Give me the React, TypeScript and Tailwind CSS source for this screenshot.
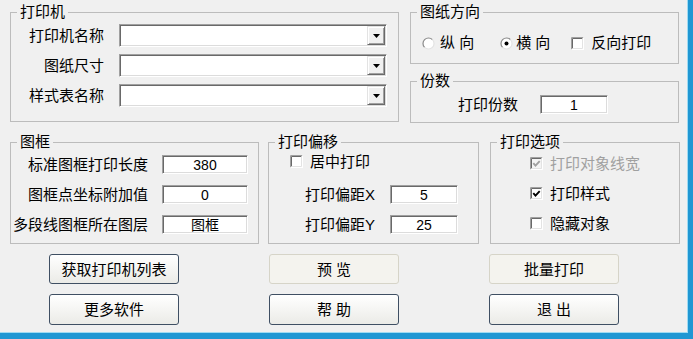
import type { ReactNode } from "react";

function GroupBox({
  title,
  className = "",
  children,
}: {
  title: string;
  className?: string;
  children?: ReactNode;
}) {
  return (
    <fieldset className={`border border-[#bcbcbc] min-w-0 ${className}`}>
      <legend className="ml-[6px] px-[3px] text-[15px] leading-[18px]">{title}</legend>
      {children}
    </fieldset>
  );
}

// classic sunken edit box
function Field({ value, className = "" }: { value: string; className?: string }) {
  return (
    <div
      className={`h-[19px] bg-white border border-t-[#a0a0a0] border-l-[#a0a0a0] border-r-white border-b-white shadow-[inset_1px_1px_0_#696969,inset_-1px_-1px_0_#dcdcdc] flex items-center justify-center text-[14px] leading-none ${className}`}
    >
      {value}
    </div>
  );
}

function Combo({ className = "" }: { className?: string }) {
  return (
    <div
      className={`h-[23px] bg-white border border-t-[#a0a0a0] border-l-[#a0a0a0] border-r-white border-b-white shadow-[inset_1px_1px_0_#696969,inset_-1px_-1px_0_#dcdcdc] flex p-[1px] ${className}`}
    >
      <div className="ml-auto w-[18px] h-full bg-[#f0f0f0] border border-t-[#e3e3e3] border-l-[#e3e3e3] border-r-[#696969] border-b-[#696969] shadow-[inset_1px_1px_0_#fff,inset_-1px_-1px_0_#a0a0a0] flex items-center justify-center">
        <svg width="7" height="4" viewBox="0 0 7 4">
          <polygon points="0,0 7,0 3.5,4" fill="#000" />
        </svg>
      </div>
    </div>
  );
}

function Radio({ checked = false }: { checked?: boolean }) {
  return (
    <svg width="13" height="13" viewBox="0 0 13 13" className="shrink-0">
      <circle cx="6.5" cy="6.5" r="5.5" fill="#fff" />
      <path d="M2.6 10.4 A5.5 5.5 0 0 1 10.4 2.6" stroke="#8a8a8a" strokeWidth="1.2" fill="none" />
      <path d="M10.4 2.6 A5.5 5.5 0 0 1 2.6 10.4" stroke="#e3e3e3" strokeWidth="1.2" fill="none" />
      {checked && <circle cx="6.5" cy="6.5" r="2" fill="#000" />}
    </svg>
  );
}

function Check({ checked = false, disabled = false }: { checked?: boolean; disabled?: boolean }) {
  return (
    <svg width="13" height="13" viewBox="0 0 13 13" className="shrink-0">
      <rect x="0" y="0" width="13" height="13" fill={disabled ? "#f4f4f4" : "#fff"} />
      <path d="M0.5 12.5 V0.5 H12.5" stroke="#a0a0a0" fill="none" />
      <path d="M1.5 11.5 V1.5 H11.5" stroke="#696969" fill="none" />
      <path d="M0.5 12.5 H12.5 V0.5" stroke="#fff" fill="none" />
      <path d="M1.5 11.5 H11.5 V1.5" stroke="#e3e3e3" fill="none" />
      {checked && (
        <path
          d="M3.3 6.2 L5.5 8.6 L9.7 4.2"
          stroke={disabled ? "#a0a0a0" : "#000"}
          strokeWidth="1.9"
          fill="none"
        />
      )}
    </svg>
  );
}

function Btn({
  label,
  soft = false,
  className = "",
}: {
  label: string;
  soft?: boolean;
  className?: string;
}) {
  return (
    <button
      className={`w-[130px] rounded-[3px] border text-[15px] leading-none flex items-center justify-center ${
        soft
          ? "border-[#d6d4c8] bg-[#f4f3ee]"
          : "border-[#3f4f63] bg-gradient-to-b from-white to-[#ebebe7]"
      } ${className}`}
    >
      {label}
    </button>
  );
}

export default function App() {
  return (
    <div className="w-[693px] h-[339px] bg-[#1f97d3] overflow-hidden font-['Liberation_Sans','Noto_Sans_CJK_SC',sans-serif] text-black">
      <div className="w-[688px] h-[333px] bg-[#f0f0f0] border-r border-b border-[#9fdbf2] flex flex-col pt-[3px] text-[15px]">
        {/* top row */}
        <div className="flex h-[120px] pl-[10px]">
          <GroupBox title="打印机" className="w-[389px] h-[119px]">
            <div className="flex flex-col gap-[7px] pt-[3px]">
              {["打印机名称", "图纸尺寸", "样式表名称"].map((t) => (
                <div key={t} className="flex items-center h-[23px]">
                  <span className="w-[93px] text-right leading-[18px]">{t}</span>
                  <Combo className="ml-[15px] w-[268px]" />
                </div>
              ))}
            </div>
          </GroupBox>

          <div className="ml-[11px] w-[269px] flex flex-col gap-[8px]">
            <GroupBox title="图纸方向" className="h-[61px]">
              <div className="flex items-center h-[18px] mt-[13px] pl-[11px] leading-[18px]">
                <Radio />
                <span className="ml-[5px]">纵 向</span>
                <span className="ml-[26px]">
                  <Radio checked />
                </span>
                <span className="ml-[3px]">横 向</span>
                <span className="ml-[21px]">
                  <Check />
                </span>
                <span className="ml-[7px]">反向打印</span>
              </div>
            </GroupBox>
            <GroupBox title="份数" className="h-[51px]">
              <div className="flex items-center h-[19px] mt-[5px] pl-[47px] leading-[18px]">
                <span>打印份数</span>
                <Field value="1" className="ml-[22px] w-[68px]" />
              </div>
            </GroupBox>
          </div>
        </div>

        {/* middle row */}
        <div className="flex h-[111px] mt-[10px] pl-[10px]">
          <GroupBox title="图框" className="w-[249px] h-[111px]">
            <div className="flex flex-col gap-[11px] pt-[4px]">
              {[
                ["标准图框打印长度", "380"],
                ["图框点坐标附加值", "0"],
                ["多段线图框所在图层", "图框"],
              ].map(([t, v]) => (
                <div key={t} className="flex items-center h-[19px]">
                  <span className="w-[137px] text-right leading-[18px] whitespace-nowrap">{t}</span>
                  <Field value={v} className="ml-[14px] w-[86px]" />
                </div>
              ))}
            </div>
          </GroupBox>

          <GroupBox title="打印偏移" className="ml-[9px] w-[211px] h-[111px]">
            <div className="flex flex-col pt-[1px]">
              <div className="flex items-center h-[19px] pl-[21px] leading-[18px]">
                <Check />
                <span className="ml-[7px]">居中打印</span>
              </div>
              <div className="flex items-center h-[19px] mt-[14px] pl-[36px] leading-[18px]">
                <span className="w-[85px]">打印偏距X</span>
                <Field value="5" className="w-[68px]" />
              </div>
              <div className="flex items-center h-[19px] mt-[11px] pl-[36px] leading-[18px]">
                <span className="w-[85px]">打印偏距Y</span>
                <Field value="25" className="w-[68px]" />
              </div>
            </div>
          </GroupBox>

          <GroupBox title="打印选项" className="ml-[11px] w-[190px] h-[111px]">
            <div className="flex flex-col gap-[11px] pt-[3px]">
              <div className="flex items-center h-[19px] pl-[39px] leading-[18px] text-[#a0a0a0]">
                <Check checked disabled />
                <span className="ml-[7px]">打印对象线宽</span>
              </div>
              <div className="flex items-center h-[19px] pl-[39px] leading-[18px]">
                <Check checked />
                <span className="ml-[7px]">打印样式</span>
              </div>
              <div className="flex items-center h-[19px] pl-[39px] leading-[18px]">
                <Check />
                <span className="ml-[7px]">隐藏对象</span>
              </div>
            </div>
          </GroupBox>
        </div>

        {/* buttons */}
        <div className="flex mt-[10px] pl-[49px] gap-[90px]">
          <Btn label="获取打印机列表" className="h-[30px]" />
          <Btn label="预 览" soft className="h-[30px]" />
          <Btn label="批量打印" soft className="h-[30px]" />
        </div>
        <div className="flex mt-[10px] pl-[49px] gap-[90px]">
          <Btn label="更多软件" className="h-[31px]" />
          <Btn label="帮 助" className="h-[31px]" />
          <Btn label="退 出" className="h-[31px]" />
        </div>
      </div>
    </div>
  );
}
